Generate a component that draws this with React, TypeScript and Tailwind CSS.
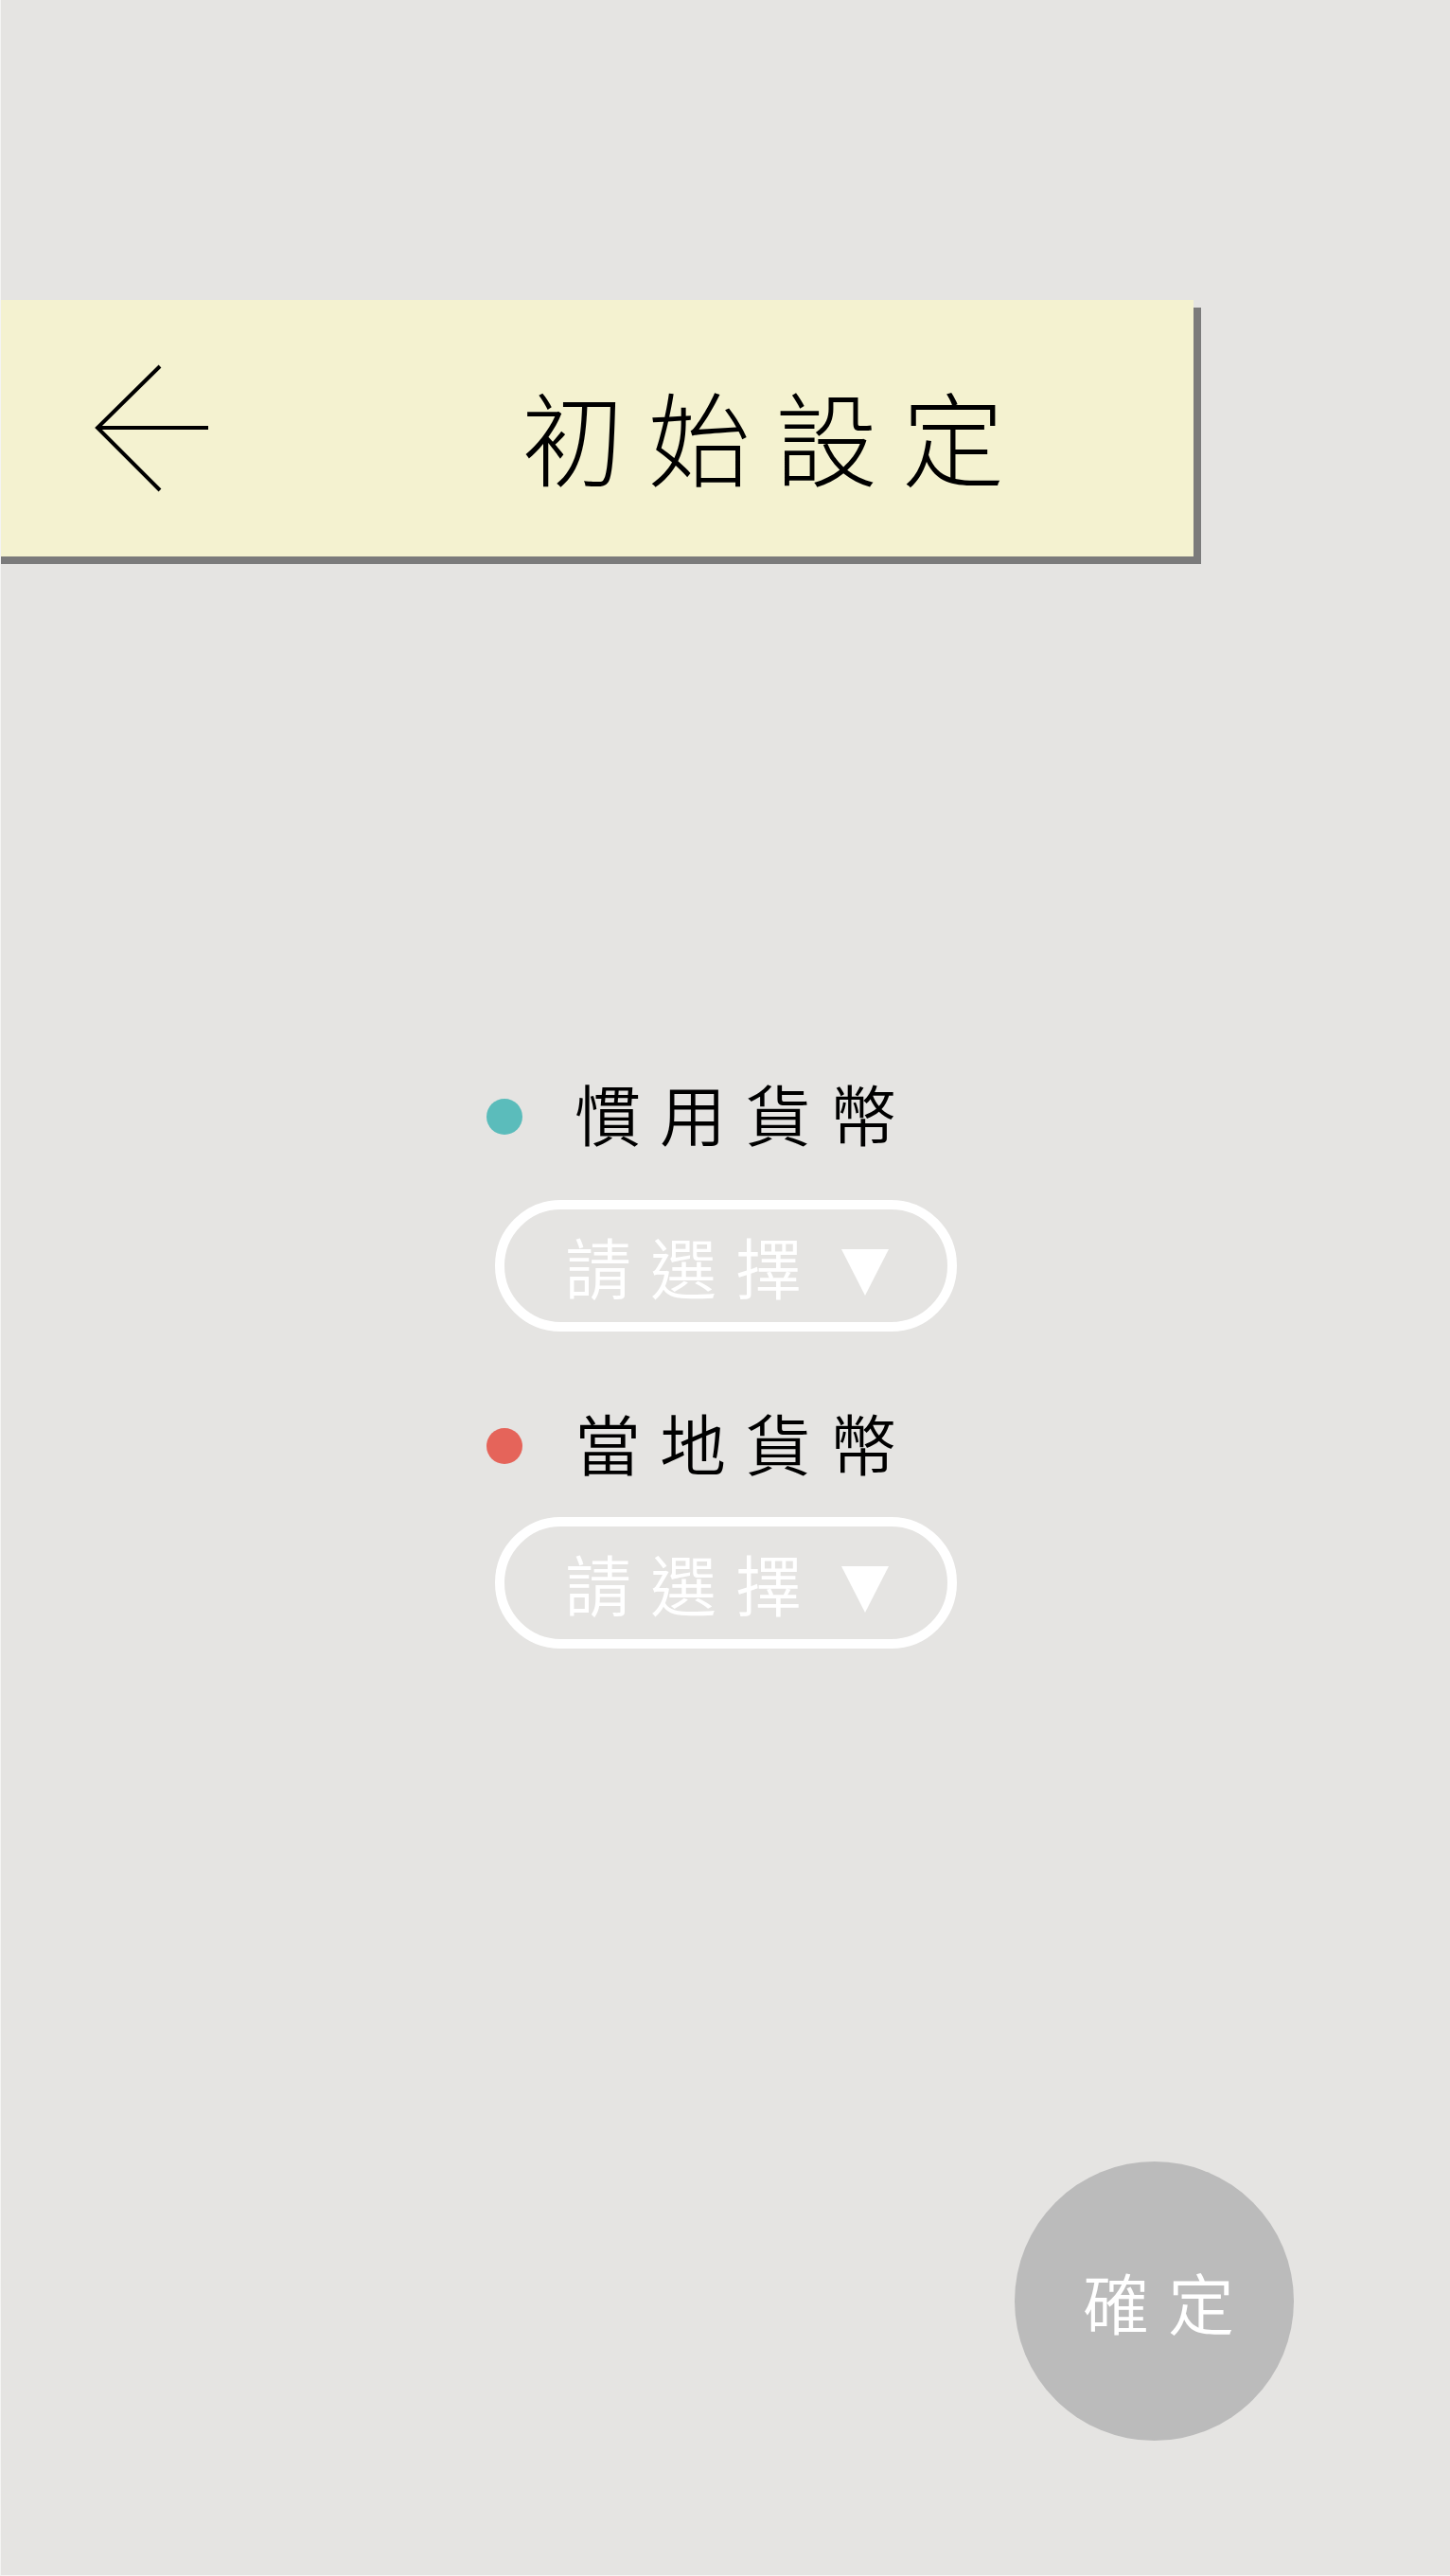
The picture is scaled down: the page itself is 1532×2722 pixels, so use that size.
import React from "react";

const BackArrow = () => (
  <svg width="122" height="136" viewBox="0 0 122 136" fill="none">
    <path
      d="M69 2 L3 67 L69 133 M3 67 H120"
      stroke="#000"
      strokeWidth="4"
      strokeLinecap="butt"
      strokeLinejoin="miter"
    />
  </svg>
);

const Triangle = () => (
  <svg width="50" height="49" viewBox="0 0 50 49" className="mt-[14px] ml-[22px]">
    <path d="M0 0 H50 L25 49 Z" fill="#fff" />
  </svg>
);

const CurrencyField = ({
  label,
  dotColor,
  gapClass,
}: {
  label: string;
  dotColor: string;
  gapClass: string;
}) => {
  return (
    <div className="flex flex-col">
      <div className="flex h-[70px] items-center">
        <span className={`mt-[8px] block h-[38px] w-[38px] rounded-full ${dotColor}`} />
        <span className="ml-[55px] text-[70px] leading-none tracking-[20px] text-black">
          {label}
        </span>
      </div>
      <button
        className={`${gapClass} ml-[9px] flex h-[139px] w-[488px] items-center rounded-full border-[10px] border-white pl-[64px] text-left`}
      >
        <span className="text-[70px] leading-none tracking-[20px] text-white">請選擇</span>
        <Triangle />
      </button>
    </div>
  );
};

export default function App() {
  return (
    <div className="flex h-[2722px] w-full flex-col overflow-hidden border-b border-l border-[#f4f4f4] bg-[#e5e4e2] font-['Noto_Sans_CJK_TC','Noto_Sans',sans-serif] font-[350]">
      <header className="-ml-[21px] mt-[317px] flex h-[271px] w-[1281px] shrink-0 items-center bg-[#f4f2d0] shadow-[8px_8px_0_#7b7b7b]">
        <div className="ml-[120px]">
          <BackArrow />
        </div>
        <h1 className="ml-[329px] mt-[13px] text-[108px] font-light leading-none tracking-[26px] text-black">
          初始設定
        </h1>
      </header>

      <main className="ml-[513px] mt-[553px] flex flex-col">
        <CurrencyField label="慣用貨幣" dotColor="bg-[#5bbcbb]" gapClass="mt-[57px]" />
        <div className="mt-[82px]">
          <CurrencyField label="當地貨幣" dotColor="bg-[#e5645a]" gapClass="mt-[44px]" />
        </div>
      </main>

      <button className="ml-[1071px] mt-[542px] flex h-[295px] w-[295px] shrink-0 items-center justify-center rounded-full bg-[#bbbbbb] pl-[29px] text-[70px] leading-none tracking-[20px] text-white">
        確定
      </button>
    </div>
  );
}
